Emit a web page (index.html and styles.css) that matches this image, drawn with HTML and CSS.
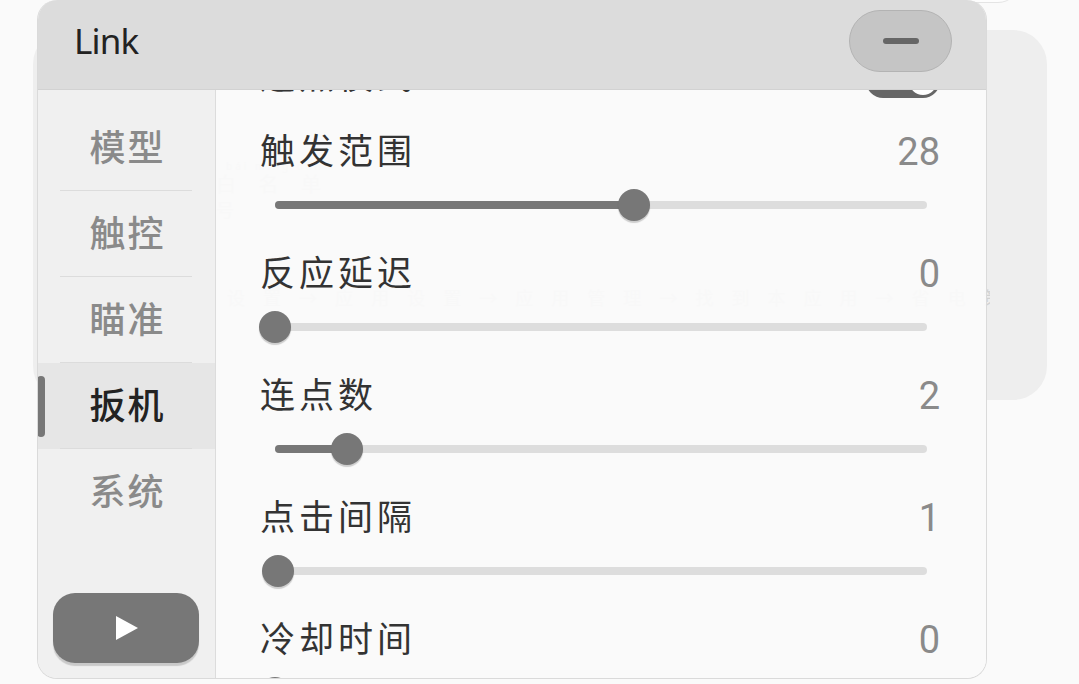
FILE: index.html
```html
<!DOCTYPE html>
<html lang="zh-CN">
<head>
<meta charset="utf-8">
<title>Link</title>
<link rel="stylesheet" href="styles.css">
</head>
<body>
<div class="desk">
  <div class="ghost-top"></div>
  <div class="card">
    <div class="card-pinyin">bái míng dān</div>
    <div class="card-title">白 名 单</div>
    <div class="card-sub">号</div>
    <div class="card-path">设 置 → 应 用 设 置 → 应 用 管 理 → 找 到 本 应 用 → 省 电 策 略 → 无 限 制</div>
  </div>

  <div class="panel">
    <header class="head">
      <span class="title">Link</span>
      <button class="min" type="button"><span class="min-bar"></span></button>
    </header>
    <div class="body">
      <nav class="side">
        <div class="tabs">
          <div class="tab">模型</div>
          <div class="tab">触控</div>
          <div class="tab">瞄准</div>
          <div class="tab active">扳机</div>
          <div class="tab last">系统</div>
        </div>
        <button class="play" type="button">
          <svg width="24" height="26" viewBox="0 0 24 26"><polygon points="1,1 23,13 1,25" fill="#ffffff"/></svg>
        </button>
      </nav>
      <main class="content">
        <div class="list">
          <div class="row toggle-row">
            <div class="line">
              <span class="label">连点模式</span>
              <span class="toggle"><span class="toggle-knob"></span></span>
            </div>
          </div>
          <div class="row">
            <div class="line"><span class="label">触发范围</span><span class="value">28</span></div>
            <div class="slider"><div class="track"><div class="fill" style="width:55.1%"></div><div class="knob" style="left:55.1%"></div></div></div>
          </div>
          <div class="row">
            <div class="line"><span class="label">反应延迟</span><span class="value">0</span></div>
            <div class="slider"><div class="track"><div class="fill" style="width:0%"></div><div class="knob" style="left:0%"></div></div></div>
          </div>
          <div class="row">
            <div class="line"><span class="label">连点数</span><span class="value">2</span></div>
            <div class="slider"><div class="track"><div class="fill" style="width:11%"></div><div class="knob" style="left:11%"></div></div></div>
          </div>
          <div class="row">
            <div class="line"><span class="label">点击间隔</span><span class="value">1</span></div>
            <div class="slider"><div class="track"><div class="fill" style="width:0.5%"></div><div class="knob" style="left:0.5%"></div></div></div>
          </div>
          <div class="row">
            <div class="line"><span class="label">冷却时间</span><span class="value">0</span></div>
            <div class="slider"><div class="track"><div class="fill" style="width:0%"></div><div class="knob" style="left:0%"></div></div></div>
          </div>
        </div>
      </main>
    </div>
  </div>
</div>
</body>
</html>
```

FILE: styles.css
```css
* { box-sizing: border-box; }

html, body {
  margin: 0;
  padding: 0;
  width: 1079px;
  height: 684px;
  overflow: hidden;
  background: #fafafa;
  font-family: "Noto Sans CJK SC", "Noto Sans", sans-serif;
}

.desk {
  position: relative;
  width: 1079px;
  height: 684px;
  overflow: hidden;
}

/* underlying desktop content */
.ghost-top {
  position: absolute;
  left: 720px;
  top: -60px;
  width: 300px;
  height: 63px;
  border-radius: 22px;
  background: #fdfdfd;
  border: 1px solid #e4e4e4;
}

.card {
  position: absolute;
  left: 33px;
  top: 30px;
  width: 1014px;
  height: 370px;
  border-radius: 34px;
  background: #eeeeee;
  overflow: hidden;
  padding: 130px 0 0 183px;
  color: #d2d2d2;
}

.card-pinyin {
  font-family: "Noto Sans", sans-serif;
  font-size: 10px;
  line-height: 12px;
  letter-spacing: 3px;
  padding-left: 10px;
}

.card-title {
  font-size: 20px;
  line-height: 24px;
  letter-spacing: 9px;
}

.card-sub {
  font-size: 18px;
  line-height: 22px;
  margin-top: 2px;
}

.card-path {
  margin-top: 65px;
  margin-left: 11px;
  width: 763px;
  white-space: nowrap;
  overflow: hidden;
  font-size: 18px;
  line-height: 24px;
  letter-spacing: 7px;
}

/* overlay window */
.panel {
  position: absolute;
  left: 37px;
  top: 0;
  width: 950px;
  height: 679px;
  border: 1px solid #dadada;
  border-top: none;
  border-radius: 20px;
  overflow: hidden;
  display: flex;
  flex-direction: column;
}

.head {
  flex: 0 0 90px;
  background: #dcdcdc;
  border-bottom: 1px solid #d2d2d2;
  display: flex;
  align-items: center;
  justify-content: space-between;
  padding: 0 34px 8px 36px;
}

.title {
  font-family: "Noto Sans", sans-serif;
  font-size: 35px;
  line-height: 40px;
  color: #222222;
  letter-spacing: -0.8px;
}

.min {
  width: 103px;
  height: 62px;
  border-radius: 31px;
  background: #c5c5c5;
  border: 1px solid #b3b3b3;
  padding: 0;
  display: flex;
  align-items: center;
  justify-content: center;
}

.min-bar {
  display: block;
  width: 36px;
  height: 6px;
  border-radius: 3px;
  background: #666666;
}

.body {
  flex: 1;
  display: flex;
  min-height: 0;
}

.side {
  flex: 0 0 178px;
  background: #f0f0f0;
  border-right: 1px solid #dcdcdc;
  display: flex;
  flex-direction: column;
  padding: 15px 0 15px 0;
}

.tabs {
  display: flex;
  flex-direction: column;
}

.tab {
  position: relative;
  height: 86px;
  display: flex;
  align-items: center;
  justify-content: center;
  padding: 0 0 7px 2px;
  font-size: 36px;
  letter-spacing: 2px;
  color: #8a8a8a;
  font-weight: 500;
  background: linear-gradient(#dcdcdc, #dcdcdc) no-repeat 22px 100% / 132px 1px;
}

.tab.last { background: none; }

.tab.active {
  color: #222222;
  background-color: #e6e6e6;
}

.tab.active::before {
  content: "";
  position: absolute;
  left: -1px;
  top: 13px;
  width: 8px;
  height: 61px;
  border-radius: 4px;
  background: #777777;
}

.play {
  margin: auto 0 0 15px;
  width: 146px;
  height: 70px;
  border: none;
  border-radius: 22px;
  background: #777777;
  box-shadow: 0 3px 1px rgba(0, 0, 0, 0.16);
  display: flex;
  align-items: center;
  justify-content: center;
  padding: 0 0 0 2px;
}

.play svg { display: block; }

.content {
  flex: 1;
  background: rgba(250, 250, 250, 0.95);
  overflow: hidden;
  padding: 0 46px 0 44px;
}

.list {
  margin-top: -35px;
  display: flex;
  flex-direction: column;
}

.row { margin-bottom: 27px; }

.toggle-row { margin-bottom: 31px; }

.line {
  height: 44px;
  display: flex;
  align-items: center;
  justify-content: space-between;
}

.label {
  font-size: 35px;
  letter-spacing: 4px;
  color: #333333;
  line-height: 44px;
  margin-top: -6px;
}

.value {
  font-family: Roboto, "Noto Sans", sans-serif;
  font-size: 38px;
  color: #8a8a8a;
  line-height: 44px;
}

.toggle {
  position: relative;
  display: flex;
  justify-content: flex-end;
  align-items: center;
  width: 74px;
  height: 34px;
  border-radius: 17px;
  background: #666666;
  padding: 3px;
  margin-top: 8px;
}

.toggle-knob {
  width: 28px;
  height: 28px;
  border-radius: 50%;
  background: #ffffff;
}

.slider {
  margin: 11px 13px 0 15px;
  height: 40px;
  display: flex;
  align-items: center;
}

.track {
  position: relative;
  width: 100%;
  height: 8px;
  border-radius: 4px;
  background: #dddddd;
}

.fill {
  height: 8px;
  border-radius: 4px;
  background: #777777;
}

.knob {
  position: absolute;
  top: 50%;
  width: 32px;
  height: 32px;
  border-radius: 50%;
  background: #777777;
  transform: translate(-50%, -50%);
  box-shadow: 0 2px 1px rgba(0, 0, 0, 0.18);
}
```
